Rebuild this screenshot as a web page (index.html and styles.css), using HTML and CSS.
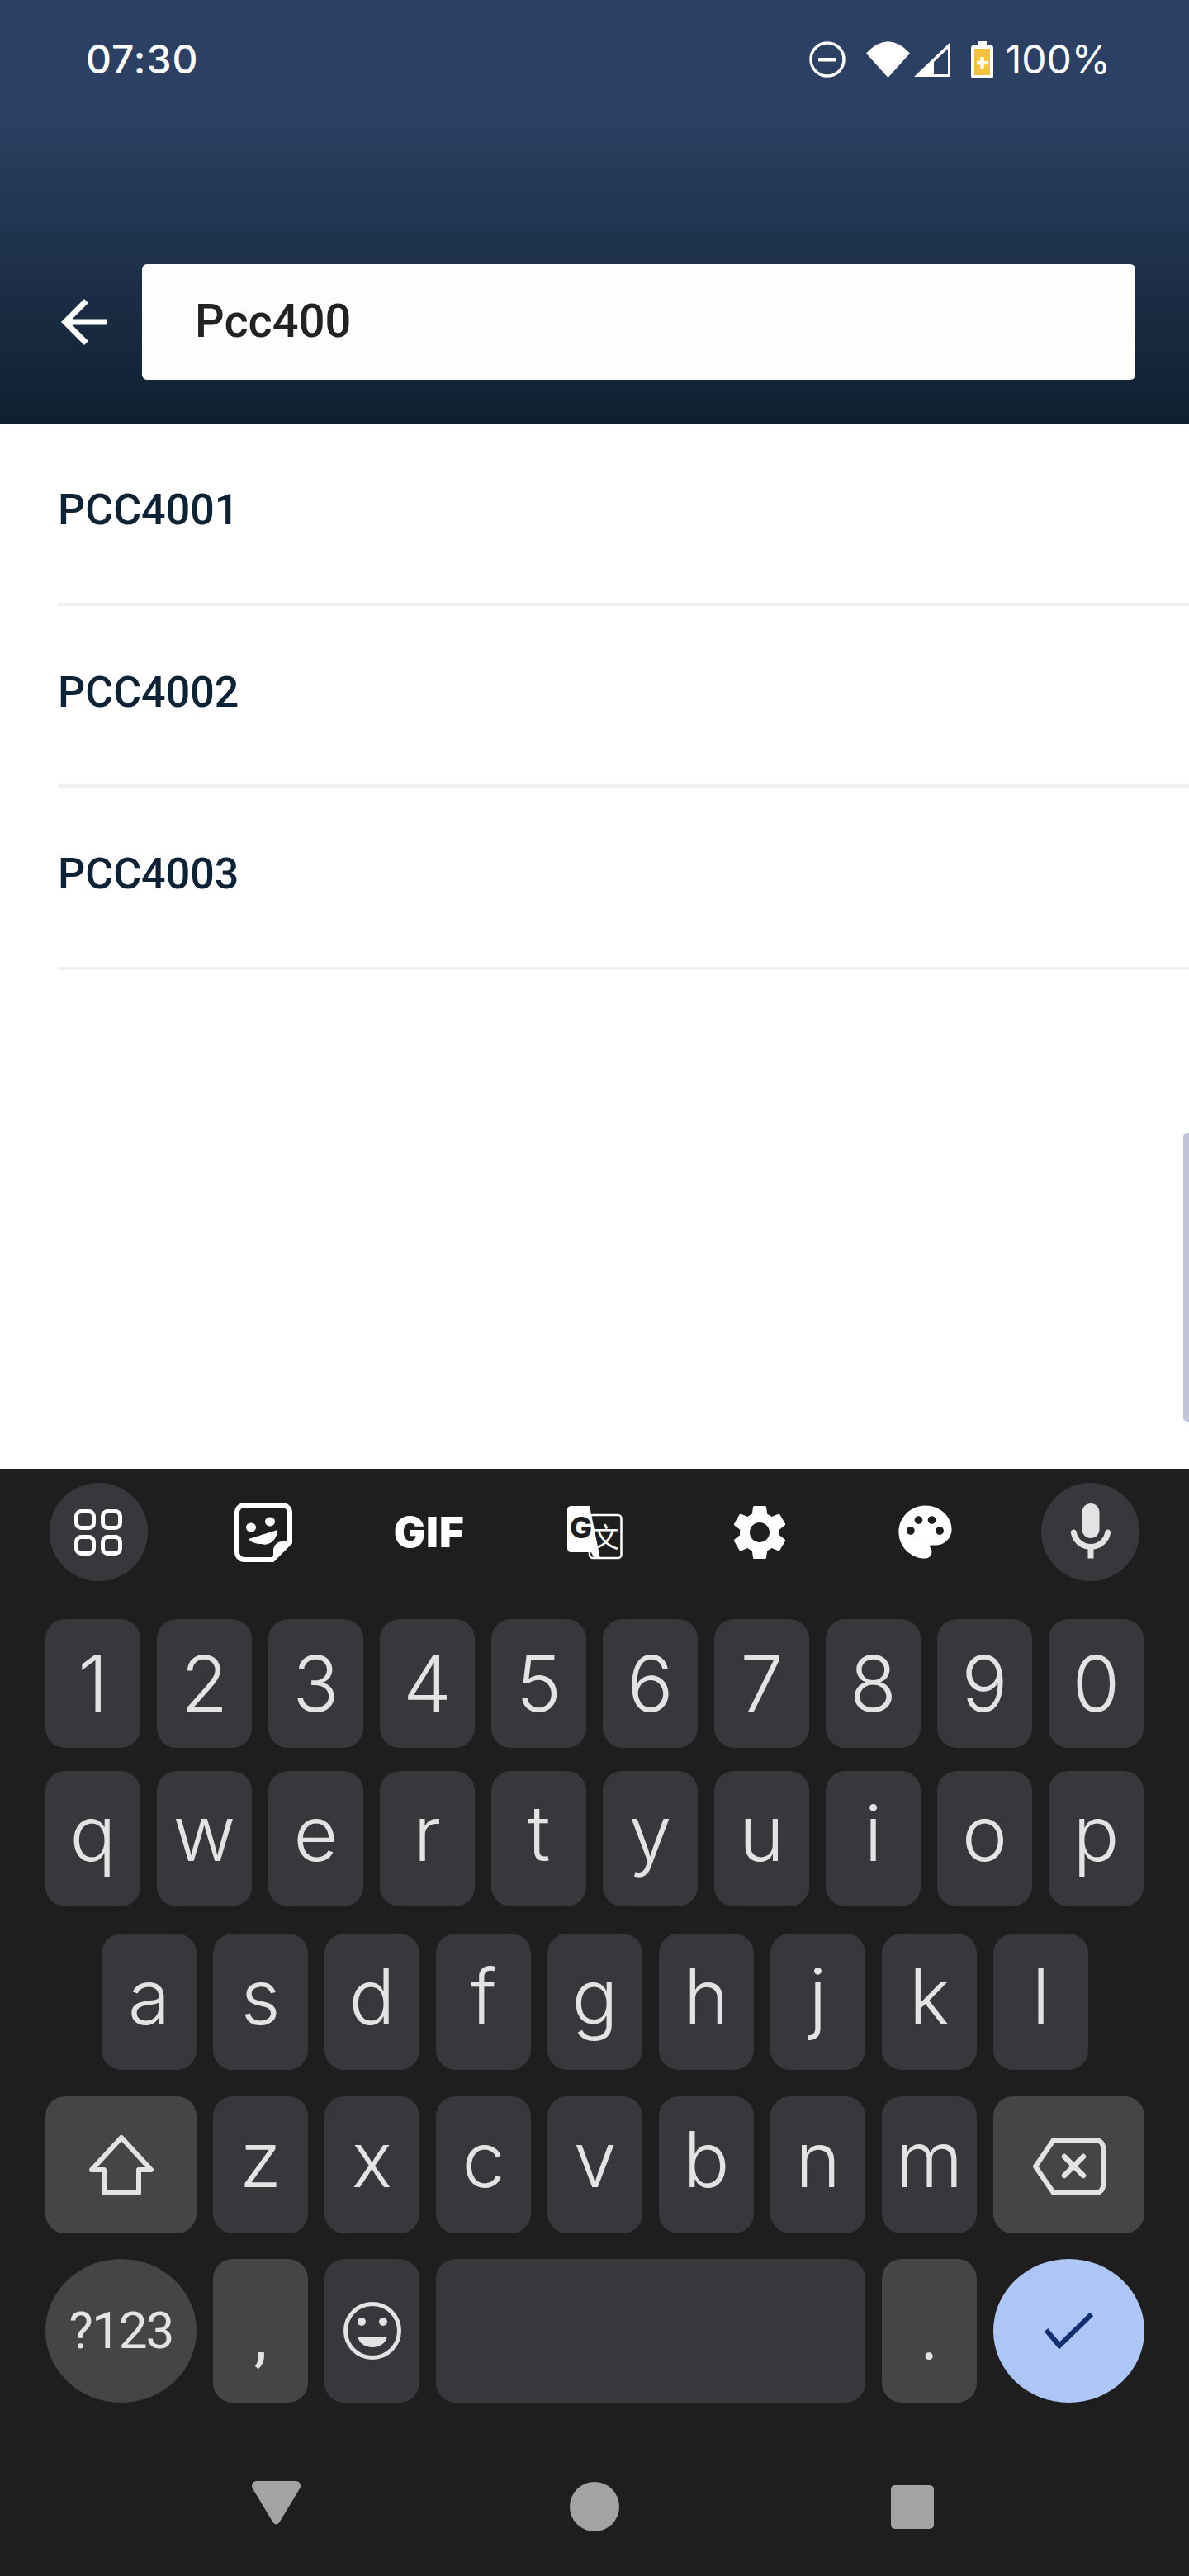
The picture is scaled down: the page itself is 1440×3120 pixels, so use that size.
FILE: index.html
```html
<!DOCTYPE html>
<html lang="en">
<head>
    <meta charset="UTF-8">
    <meta name="viewport" content="width=device-width, initial-scale=1.0">
    <title>Search</title>
    <link rel="stylesheet" href="styles.css">
</head>
<body>
    <header class="header">
        <div class="status">
            <span class="time">07:30</span>
            <div class="status-right">
                <svg class="ic-dnd" width="44" height="44" viewBox="0 0 44 44"><circle cx="22" cy="22" r="20" fill="none" stroke="#fff" stroke-width="3.5"/><rect x="11" y="20" width="22" height="4.5" rx="1" fill="#fff"/></svg>
                <svg class="ic-wifi" width="53" height="44" viewBox="0 0 53 44"><path d="M0 14.5Q26.5 -14 53 14.5L26.5 44Z" fill="#fff"/></svg>
                <svg class="ic-signal" width="44" height="42" viewBox="0 0 44 42"><path d="M0 42L44 0V42ZM24 39H41V8L24 24Z" fill="#fff" fill-rule="evenodd"/></svg>
                <svg class="ic-battery" width="27" height="45" viewBox="0 0 27 45"><path d="M9 0H19V5H24Q27 5 27 8V42Q27 45 24 45H3Q0 45 0 42V8Q0 5 3 5H9Z" fill="#fff"/><rect x="4" y="9" width="19" height="32" fill="#f4c140"/><path d="M13.5 19V33M7 26H20" stroke="#fff" stroke-width="4.5"/></svg>
                <span class="battery-text">100%</span>
            </div>
        </div>
        <div class="search-row">
            <svg width="84" height="84" viewBox="0 0 24 24"><path d="M20 11H7.83l5.59-5.59L12 4l-8 8 8 8 1.41-1.41L7.83 13H20v-2z" fill="#fff"/></svg>
            <div class="search-box">Pcc400</div>
        </div>
    </header>

    <main class="results">
        <div class="result-row">PCC4001</div>
        <div class="result-row">PCC4002</div>
        <div class="result-row">PCC4003</div>
        <div class="scrollbar"></div>
    </main>

    <section class="keyboard">
        <div class="toolbar">
            <div class="tool tool-round">
                <svg width="58" height="56" viewBox="0 0 58 56" fill="none" stroke="#fff" stroke-width="5"><rect x="2.5" y="2.5" width="21" height="20" rx="6"/><rect x="34.5" y="2.5" width="21" height="20" rx="6"/><rect x="2.5" y="33.5" width="21" height="20" rx="6"/><rect x="34.5" y="33.5" width="21" height="20" rx="6"/></svg>
            </div>
            <div class="tool">
                <svg width="70" height="72" viewBox="0 0 70 72"><path d="M12 3H58a9 9 0 0 1 9 9V48L46 69H12a9 9 0 0 1-9-9V12a9 9 0 0 1 9-9Z" fill="none" stroke="#fff" stroke-width="6"/><path d="M67 47H58a11 11 0 0 0-11 11V69Z" fill="#fff"/><ellipse cx="20" cy="30" rx="6" ry="5.5" fill="#fff"/><ellipse cx="43" cy="23" rx="6" ry="5.5" fill="#fff"/><path d="M17 44L52 33C52 45 42 53 33 50C26 50 20 48 17 44Z" fill="#fff"/></svg>
            </div>
            <div class="tool gif">GIF</div>
            <div class="tool">
                <svg width="100" height="90" viewBox="0 0 100 90"><rect x="44" y="24" width="38.500" height="52" rx="4" fill="none" stroke="#fff" stroke-width="2.500"/><text x="47" y="63" class="tr-wen">文</text><path d="M22 13H44L57 77H50L46 69H22Q17 69 17 64V18Q17 13 22 13Z" fill="#fff"/><text x="20" y="52" class="tr-g">G</text></svg>
            </div>
            <div class="tool">
                <svg width="80" height="80" viewBox="0 0 24 24"><path d="M19.14 12.94c.04-.3.06-.61.06-.94 0-.32-.02-.64-.07-.94l2.03-1.58c.18-.14.23-.41.12-.61l-1.92-3.32c-.12-.22-.37-.29-.59-.22l-2.39.96c-.5-.38-1.03-.7-1.62-.94l-.36-2.54c-.04-.24-.24-.41-.48-.41h-3.84c-.24 0-.43.17-.47.41l-.36 2.54c-.59.24-1.13.57-1.62.94l-2.39-.96c-.22-.08-.47 0-.59.22L2.74 8.87c-.12.21-.08.47.12.61l2.03 1.58c-.05.3-.09.63-.09.94s.02.64.07.94l-2.03 1.58c-.18.14-.23.41-.12.61l1.92 3.32c.12.22.37.29.59.22l2.39-.96c.5.38 1.03.7 1.62.94l.36 2.54c.05.24.24.41.48.41h3.84c.24 0 .44-.17.47-.41l.36-2.54c.59-.24 1.13-.56 1.62-.94l2.39.96c.22.08.47 0 .59-.22l1.92-3.32c.12-.22.07-.47-.12-.61l-2.01-1.58zM12 15.6c-1.98 0-3.6-1.62-3.6-3.6s1.62-3.6 3.6-3.6 3.6 1.62 3.6 3.6-1.62 3.6-3.6 3.6z" fill="#fff"/></svg>
            </div>
            <div class="tool">
                <svg width="77" height="77" viewBox="0 0 24 24"><path d="M12 2C6.49 2 2 6.49 2 12s4.49 10 10 10c1.38 0 2.5-1.12 2.5-2.5 0-.61-.23-1.2-.64-1.67-.08-.1-.13-.21-.13-.33 0-.28.22-.5.5-.5H16c3.31 0 6-2.69 6-6 0-4.96-4.49-9-10-9zm-5.500 11c-.83 0-1.500-.67-1.500-1.500S5.670 10 6.500 10s1.500.67 1.500 1.500S7.330 13 6.500 13zm3-4C8.670 9 8 8.330 8 7.500S8.670 6 9.500 6s1.500.67 1.500 1.500S10.330 9 9.500 9zm5 0c-.83 0-1.500-.67-1.500-1.500S13.670 6 14.500 6s1.500.67 1.500 1.500S15.330 9 14.500 9zm3 4c-.83 0-1.500-.67-1.500-1.500s.67-1.500 1.500-1.500 1.500.67 1.500 1.500-.67 1.500-1.500 1.500z" fill="#fff" fill-rule="evenodd"/></svg>
            </div>
            <div class="tool tool-round">
                <svg width="84" height="84" viewBox="0 0 24 24"><path d="M12 14c1.660 0 3-1.340 3-3V5c0-1.660-1.340-3-3-3S9 3.340 9 5v6c0 1.660 1.340 3 3 3zm5.910-3c-.49 0-.9.360-.98.850C16.520 14.200 14.470 16 12 16s-4.520-1.800-4.930-4.150c-.08-.49-.49-.85-.98-.85-.61 0-1.090.540-1 1.140.49 3 2.890 5.350 5.910 5.780V21h2v-3.080c3.020-.43 5.420-2.780 5.910-5.780.1-.6-.39-1.140-1-1.140z" fill="#e3e3e3"/></svg>
            </div>
        </div>

        <div class="key-row row-digits">
            <div class="key">1</div><div class="key">2</div><div class="key">3</div><div class="key">4</div><div class="key">5</div>
            <div class="key">6</div><div class="key">7</div><div class="key">8</div><div class="key">9</div><div class="key">0</div>
        </div>
        <div class="key-row row-top">
            <div class="key letter">q</div><div class="key letter">w</div><div class="key letter">e</div><div class="key letter">r</div><div class="key letter">t</div>
            <div class="key letter">y</div><div class="key letter">u</div><div class="key letter">i</div><div class="key letter">o</div><div class="key letter">p</div>
        </div>
        <div class="key-row row-middle">
            <div class="key letter">a</div><div class="key letter">s</div><div class="key letter">d</div><div class="key letter">f</div><div class="key letter">g</div>
            <div class="key letter">h</div><div class="key letter">j</div><div class="key letter">k</div><div class="key letter">l</div>
        </div>
        <div class="key-row row-bottom">
            <div class="key wide mod">
                <svg width="78" height="75" viewBox="0 0 78 75"><path d="M39 4L75 43H60V71H18V43H3Z" fill="none" stroke="#e3e3e3" stroke-width="6" stroke-linejoin="round"/></svg>
            </div>
            <div class="key letter">z</div><div class="key letter">x</div><div class="key letter">c</div><div class="key letter">v</div>
            <div class="key letter">b</div><div class="key letter">n</div><div class="key letter">m</div>
            <div class="key wide mod">
                <svg class="ic-backspace" width="88" height="70" viewBox="0 0 88 70"><path d="M25 3H76a9 9 0 0 1 9 9V58a9 9 0 0 1-9 9H25L3 35Z" fill="none" stroke="#e3e3e3" stroke-width="6" stroke-linejoin="round"/><path d="M38 23L61 46M61 23L38 46" stroke="#e3e3e3" stroke-width="6.500" stroke-linecap="round"/></svg>
            </div>
        </div>
        <div class="key-row row-space">
            <div class="key wide mod oval symbols">?123</div>
            <div class="key mod punct">,</div>
            <div class="key">
                <svg width="70" height="70" viewBox="0 0 70 70"><circle cx="35" cy="35" r="32.500" fill="none" stroke="#e3e3e3" stroke-width="5"/><circle cx="22" cy="24" r="5" fill="#e3e3e3"/><circle cx="48" cy="24" r="5" fill="#e3e3e3"/><path d="M17 42H53C51 50 44 55 35 55S19 50 17 42Z" fill="#e3e3e3"/></svg>
            </div>
            <div class="key space"></div>
            <div class="key mod punct">.</div>
            <div class="key wide oval enter">
                <svg width="61" height="46" viewBox="0 0 61 46"><path d="M3 22L19 41L58 3" fill="none" stroke="#12306f" stroke-width="6"/></svg>
            </div>
        </div>

        <div class="navbar">
            <svg class="nav-back" width="59" height="53" viewBox="0 0 59 53"><path d="M6 0H53Q59 0 59 6Q59 8 57.500 10L34 49Q29.500 56 25 49L1.500 10Q0 8 0 6Q0 0 6 0Z" fill="#a3a3a3"/></svg>
            <div class="nav-home"></div>
            <div class="nav-recent"></div>
        </div>
    </section>
</body>
</html>
```

FILE: styles.css
```css
* {
    box-sizing: border-box;
}
body {
    margin: 0;
    width: 1440px;
    height: 3120px;
    overflow: hidden;
    background-color: #fff;
    font-family: Roboto, sans-serif;
}

/* top bar */
.header {
    height: 513px;
    padding-top: 49px;
    background: linear-gradient(#2c4063 0, #2c4063 130px, #0f2030 513px);
}
.status {
    display: flex;
    justify-content: space-between;
    align-items: center;
    height: 46px;
    padding: 0 95px 0 104px;
    color: #fff;
    font-family: Inter, sans-serif;
    font-size: 48px;
    line-height: 46px;
}
.time {
    font-weight: 500;
    letter-spacing: 1px;
}
.status-right {
    display: flex;
    align-items: center;
}
.ic-wifi {
    margin-left: 25px;
}
.ic-signal {
    margin-left: 5px;
}
.ic-battery {
    margin-left: 25px;
}
.battery-text {
    margin-left: 15px;
}
.search-row {
    display: flex;
    align-items: center;
    margin-top: 225px;
    padding-left: 60px;
}
.search-box {
    display: flex;
    align-items: center;
    width: 1203px;
    height: 140px;
    margin-left: 28px;
    padding-left: 64px;
    padding-bottom: 3px;
    background-color: #fdfdfd;
    border-radius: 6px;
    color: #222;
    font-size: 56px;
    font-weight: 500;
}

/* results */
.results {
    position: relative;
    height: 1266px;
    padding-left: 70px;
}
.result-row {
    display: flex;
    align-items: center;
    height: 220.5px;
    padding-bottom: 7px;
    border-bottom: 4px solid #f0f0f0;
    color: #0e2236;
    font-size: 52px;
    font-weight: 500;
}
.scrollbar {
    position: absolute;
    top: 859px;
    right: 0;
    width: 7px;
    height: 350px;
    background-color: #c0c4d6;
    border-radius: 5px 0 0 5px;
}

/* keyboard */
.keyboard {
    height: 1341px;
    padding-top: 17px;
    background-color: #1e1e1e;
}
.toolbar {
    display: grid;
    grid-template-columns: repeat(7, 1fr);
    justify-items: center;
    padding: 0 19px;
}
.tool {
    display: flex;
    align-items: center;
    justify-content: center;
    width: 119px;
    height: 119px;
}
.tool-round {
    background-color: #37383c;
    border-radius: 50%;
}
.gif {
    color: #fff;
    font-family: Inter, sans-serif;
    font-size: 51px;
    font-weight: 900;
    letter-spacing: 1px;
}
.tr-g {
    fill: #1e1e1e;
    font-family: Inter, sans-serif;
    font-size: 36px;
    font-weight: 800;
}
.tr-wen {
    fill: #fff;
    font-family: "Noto Sans CJK SC", sans-serif;
    font-size: 33px;
}
.key-row {
    display: flex;
    gap: 20px;
    padding-left: 55px;
}
.row-digits {
    height: 156px;
    margin-top: 46px;
}
.row-top {
    height: 164px;
    margin-top: 28px;
}
.row-middle {
    height: 165px;
    margin-top: 33px;
    padding-left: 123px;
}
.row-bottom {
    height: 166px;
    margin-top: 32px;
}
.row-space {
    height: 174px;
    margin-top: 31px;
}
.key {
    display: flex;
    align-items: center;
    justify-content: center;
    width: 115px;
    background-color: #37383c;
    border-radius: 24px;
    color: #e3e3e3;
    font-family: Inter, sans-serif;
    font-size: 93px;
    font-weight: 350;
    line-height: 1;
}
.letter {
    padding-bottom: 13px;
}
.wide {
    width: 183px;
}
.space {
    width: 520px;
}
.mod {
    background-color: #444645;
}
.oval {
    border-radius: 50%;
}
.symbols {
    font-family: Roboto, sans-serif;
    font-size: 62px;
    font-weight: 400;
    letter-spacing: -2px;
}
.punct {
    align-items: flex-end;
    padding-bottom: 39px;
    font-family: Roboto, sans-serif;
    font-size: 80px;
    font-weight: 400;
}
.enter {
    background-color: #aec6f6;
}
.ic-backspace {
    margin-top: 4px;
}

/* system nav */
.navbar {
    display: flex;
    align-items: center;
    height: 60px;
    margin-top: 96px;
    padding-left: 305px;
}
.nav-back {
    margin-top: -9px;
}
.nav-home {
    width: 60px;
    height: 60px;
    margin-left: 326px;
    background-color: #a3a3a3;
    border-radius: 50%;
}
.nav-recent {
    width: 52px;
    height: 53px;
    margin-left: 329px;
    background-color: #a3a3a3;
    border-radius: 5px;
}
```
